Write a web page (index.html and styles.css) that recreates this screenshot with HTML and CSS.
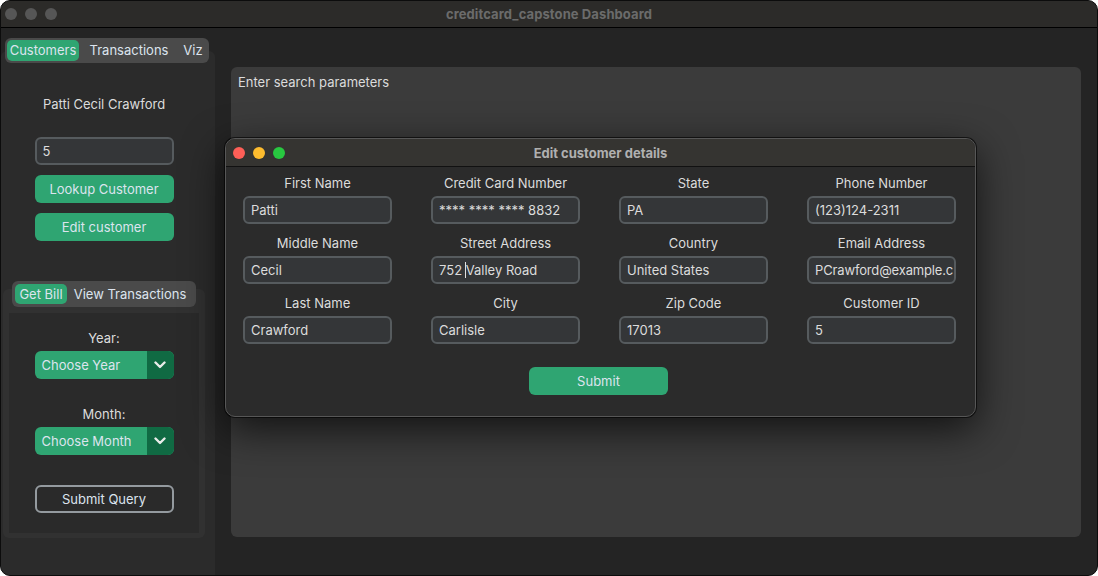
FILE: index.html
```html
<!DOCTYPE html>
<html>
<head>
<meta charset="utf-8">
<title>creditcard_capstone Dashboard</title>
<link rel="stylesheet" href="styles.css">
</head>
<body>
<div class="window">
  <div class="titlebar">
    <div class="lights">
      <span class="light off"></span>
      <span class="light off"></span>
      <span class="light off"></span>
    </div>
    <div class="title">creditcard_capstone Dashboard</div>
    <div class="spacer"></div>
  </div>
  <div class="app">
    <aside class="sidebar">
      <div class="seg seg-top">
        <span class="seg-item active it-customers">Customers</span>
        <span class="seg-item it-transactions">Transactions</span>
        <span class="seg-item it-viz">Viz</span>
      </div>
      <div class="side-frame">
        <div class="name">Patti Cecil Crawford</div>
        <div class="entry side-entry">5</div>
        <div class="btn btn-lookup">Lookup Customer</div>
        <div class="btn btn-edit">Edit customer</div>
        <div class="subtab">
          <div class="seg seg-sub">
            <span class="seg-item active it-bill">Get Bill</span>
            <span class="seg-item it-view">View Transactions</span>
          </div>
          <div class="subframe">
            <div class="sub-inner">
              <div class="lbl">Year:</div>
              <div class="option">
                <span class="option-text">Choose Year</span>
                <span class="option-arrow"><svg width="12" height="8" viewBox="0 0 12 8"><polyline points="1.5,1.5 6,6 10.5,1.5" fill="none" stroke="#e8ece9" stroke-width="2.4" stroke-linecap="round" stroke-linejoin="round"/></svg></span>
              </div>
              <div class="lbl lbl-month">Month:</div>
              <div class="option">
                <span class="option-text">Choose Month</span>
                <span class="option-arrow"><svg width="12" height="8" viewBox="0 0 12 8"><polyline points="1.5,1.5 6,6 10.5,1.5" fill="none" stroke="#e8ece9" stroke-width="2.4" stroke-linecap="round" stroke-linejoin="round"/></svg></span>
              </div>
              <div class="btn-outline">Submit Query</div>
            </div>
          </div>
        </div>
      </div>
    </aside>
    <main class="content">
      <div class="content-frame">
        <div class="content-text">Enter search parameters</div>
      </div>
    </main>
  </div>

  <div class="dialog">
    <div class="dlg-titlebar">
      <div class="lights">
        <span class="light red"></span>
        <span class="light yellow"></span>
        <span class="light green"></span>
      </div>
      <div class="dlg-title">Edit customer details</div>
      <div class="spacer"></div>
    </div>
    <div class="dlg-body">
      <div class="form-grid">
        <div class="field"><div class="flabel">First Name</div><div class="entry">Patti</div></div>
        <div class="field"><div class="flabel">Credit Card Number</div><div class="entry">**** **** **** 8832</div></div>
        <div class="field"><div class="flabel">State</div><div class="entry">PA</div></div>
        <div class="field"><div class="flabel">Phone Number</div><div class="entry">(123)124-2311</div></div>

        <div class="field"><div class="flabel">Middle Name</div><div class="entry">Cecil</div></div>
        <div class="field"><div class="flabel">Street Address</div><div class="entry">752 <span class="caret"></span>Valley Road</div></div>
        <div class="field"><div class="flabel">Country</div><div class="entry">United States</div></div>
        <div class="field"><div class="flabel">Email Address</div><div class="entry email">PCrawford@example.c</div></div>

        <div class="field"><div class="flabel">Last Name</div><div class="entry">Crawford</div></div>
        <div class="field"><div class="flabel">City</div><div class="entry">Carlisle</div></div>
        <div class="field"><div class="flabel">Zip Code</div><div class="entry">17013</div></div>
        <div class="field"><div class="flabel">Customer ID</div><div class="entry">5</div></div>
      </div>
      <div class="submit-row">
        <div class="btn btn-submit">Submit</div>
      </div>
    </div>
  </div>
</div>
</body>
</html>
```

FILE: styles.css
```css
* { box-sizing: border-box; }

html, body {
  margin: 0;
  padding: 0;
  background: #ffffff;
}

body {
  font-family: "Inter", "Noto Sans", "Liberation Sans", sans-serif;
  font-size: 13px;
  color: #dcdcdc;
  width: 1098px;
  height: 576px;
  overflow: hidden;
}

.window {
  position: relative;
  width: 1098px;
  height: 576px;
  border: 1px solid #0c0c0c;
  border-radius: 10px;
  overflow: hidden;
  background: #242424;
  display: flex;
  flex-direction: column;
}

/* ---------- title bar ---------- */
.titlebar {
  height: 27px;
  flex: 0 0 27px;
  background: #2c2b29;
  border-bottom: 1px solid #000;
  display: grid;
  grid-template-columns: 1fr auto 1fr;
  align-items: center;
  padding: 0 4px;
}

.lights {
  display: flex;
  gap: 8px;
  align-items: center;
}

.light {
  width: 12px;
  height: 12px;
  border-radius: 50%;
  display: block;
}

.light.off { background: #565656; }
.light.red { background: #fe5f57; }
.light.yellow { background: #febc2e; }
.light.green { background: #28c840; }

.title {
  font-weight: 700;
  font-size: 13px;
  color: #6b6b6b;
  letter-spacing: 0.1px;
}

/* ---------- app area ---------- */
.app {
  flex: 1;
  display: flex;
  min-height: 0;
}

.sidebar {
  width: 214px;
  flex: 0 0 214px;
  display: flex;
  flex-direction: column;
  padding-top: 10px;
}

.seg {
  display: flex;
  background: #4a4a4a;
  border-radius: 6px;
  padding: 2px;
  position: relative;
  z-index: 1;
  align-self: flex-start;
}

.seg-item {
  height: 21px;
  line-height: 21px;
  border-radius: 5px;
  color: #dce4ee;
  white-space: nowrap;
  text-align: center;
}

.seg-item.active {
  background: #2fa572;
}

.seg-top {
  margin-left: 4px;
  height: 25px;
  margin-bottom: -12px;
  width: 204px;
}

.it-customers { width: 72px; }
.it-transactions { width: 100px; }
.it-viz { width: 28px; }

.side-frame {
  flex: 1;
  background: #2b2b2b;
  border-radius: 6px 6px 0 0;
  padding: 45px 8px 0 0;
  display: flex;
  flex-direction: column;
  align-items: center;
}

.name {
  line-height: 16px;
  height: 16px;
  text-align: center;
  color: #dcdcdc;
}

.entry {
  height: 28px;
  line-height: 24px;
  background: #343638;
  border: 2px solid #565b5e;
  border-radius: 6px;
  padding: 0 6px;
  color: #dcdcdc;
  white-space: nowrap;
  overflow: hidden;
}

.side-entry {
  width: 139px;
  margin-top: 25px;
}

.btn {
  width: 139px;
  height: 28px;
  line-height: 28px;
  background: #2fa572;
  border-radius: 6px;
  color: #dce4ee;
  text-align: center;
}

.btn-lookup { margin-top: 10px; }
.btn-edit { margin-top: 10px; }

.subtab {
  align-self: stretch;
  margin: 40px 2px 0 2px;
  display: flex;
  flex-direction: column;
}

.seg-sub {
  align-self: center;
  height: 26px;
  width: 184px;
  padding: 3px;
  margin-bottom: -18px;
}

.seg-sub .seg-item {
  height: 20px;
  line-height: 20px;
}

.it-bill { width: 52px; }
.it-view { width: 126px; }

.subframe {
  background: #313131;
  border-radius: 6px;
  padding: 24px 6px 5px 6px;
}

.sub-inner {
  background: #2a2a2a;
  padding: 17px 0 20px 0;
  display: flex;
  flex-direction: column;
  align-items: center;
}

.lbl {
  line-height: 16px;
  height: 16px;
  color: #dcdcdc;
}

.lbl-month { margin-top: 27px; }

.option {
  margin-top: 5px;
  width: 139px;
  height: 28px;
  display: flex;
  border-radius: 6px;
  overflow: hidden;
  background: #2fa572;
}

.option-text {
  flex: 1;
  line-height: 28px;
  padding-left: 7px;
  color: #dce4ee;
  white-space: nowrap;
}

.option-arrow {
  width: 27px;
  background: #106a43;
  display: flex;
  align-items: center;
  justify-content: center;
}

.btn-outline {
  margin-top: 30px;
  width: 139px;
  height: 28px;
  line-height: 24px;
  border: 2px solid #949a9f;
  border-radius: 6px;
  text-align: center;
  color: #dce4ee;
}

/* ---------- main content ---------- */
.content {
  flex: 1;
  padding: 39px 16px 38px 16px;
  display: flex;
}

.content-frame {
  flex: 1;
  background: #3b3b3b;
  border-radius: 6px;
  padding: 7px 7px;
}

.content-text {
  line-height: 16px;
  color: #dcdcdc;
}

/* ---------- dialog (overlay) ---------- */
.dialog {
  position: absolute;
  left: 224px;
  top: 137px;
  width: 751px;
  height: 279px;
  border: 1px solid #575757;
  border-radius: 10px;
  overflow: hidden;
  background: #2b2b2b;
  box-shadow: 0 12px 40px rgba(0, 0, 0, 0.7), 0 0 0 1px rgba(0, 0, 0, 0.6);
  display: flex;
  flex-direction: column;
  z-index: 5;
}

.dlg-titlebar {
  height: 28px;
  flex: 0 0 28px;
  background: #353431;
  border-bottom: 1px solid #111;
  display: grid;
  grid-template-columns: 1fr auto 1fr;
  align-items: center;
  padding: 0 7px;
}

.dlg-title {
  font-weight: 700;
  color: #b0b0b0;
  font-size: 13px;
}

.dlg-body {
  padding: 6px 0 0 17px;
  display: flex;
  flex-direction: column;
}

.form-grid {
  display: grid;
  grid-template-columns: repeat(4, 149px);
  column-gap: 39px;
  row-gap: 9px;
  width: 713px;
}

.field {
  display: flex;
  flex-direction: column;
}

.flabel {
  height: 20px;
  line-height: 20px;
  text-align: center;
  color: #dcdcdc;
  margin-bottom: 3px;
}

.field .entry {
  padding-left: 6px;
}

.entry.email {
  padding-left: 6px;
  padding-right: 0;
  letter-spacing: -0.15px;
}

.caret {
  display: inline-block;
  width: 1px;
  height: 16px;
  background: #e0e0e0;
  vertical-align: -3px;
  margin-left: -1px;
}

.submit-row {
  width: 713px;
  display: flex;
  justify-content: center;
  margin-top: 23px;
}

.btn-submit {
  width: 139px;
  margin-left: -2px;
}
```
